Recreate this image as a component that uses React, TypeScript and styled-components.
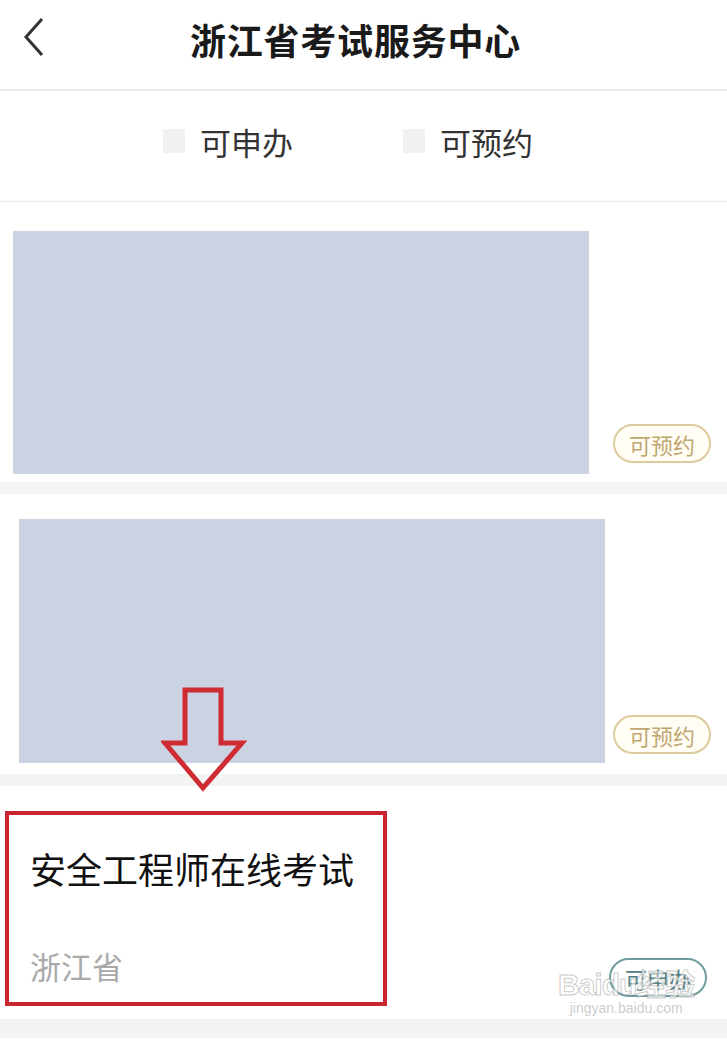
import React from "react";
import styled, { createGlobalStyle } from "styled-components";

const Global = createGlobalStyle`
    html, body {
        margin: 0;
        padding: 0;
        background: #ffffff;
    }
    body {
        font-family: "Noto Sans CJK SC", "Noto Sans", sans-serif;
        color: #222;
    }
`;

const Page = styled.div`
    position: relative;
    width: 727px;
    height: 1039px;
    overflow: hidden;
    background: #fff;
`;

const NavBar = {
    Root: styled.div`
        position: relative;
        height: 89px;
        display: flex;
        align-items: center;
        justify-content: center;
        border-bottom: solid 2px #ececec;
    `,
    Back: styled.svg`
        position: absolute;
        left: 22px;
        top: 16px;
    `,
    Title: styled.h1`
        margin: 0 16px 12px 0;
        font-size: 36px;
        font-weight: 700;
        letter-spacing: 0.8px;
        color: #1a1a1a;
    `
};

const Filter = {
    Root: styled.div`
        height: 111px;
        box-sizing: border-box;
        padding: 0 0 10px 163px;
        display: flex;
        align-items: center;
        gap: 110px;
        border-bottom: solid 1px #ececec;
    `,
    Item: styled.label`
        display: flex;
        align-items: center;
        gap: 15px;
        font-size: 31px;
        color: #333;
    `,
    Box: styled.span`
        display: block;
        width: 22px;
        height: 24px;
        background: #f1f1f1;
        border-radius: 2px;
    `
};

const Band = styled.div<{ $h: number }>`
    height: ${p => p.$h}px;
    background: #f3f3f3;
`;

const Card = {
    Root: styled.div<{ $h: number; $top: number }>`
        height: ${p => p.$h}px;
        box-sizing: border-box;
        padding-top: ${p => p.$top}px;
        display: flex;
        justify-content: space-between;
    `,
    Cover: styled.div<{ $left: number; $w: number; $h: number }>`
        margin-left: ${p => p.$left}px;
        width: ${p => p.$w}px;
        height: ${p => p.$h}px;
        background: #cbd3e2;
    `
};

const Badge = styled.span<{ $tone: "gold" | "teal"; $bottom: number; $right: number }>`
    align-self: flex-end;
    margin: 0 ${p => p.$right}px ${p => p.$bottom}px 0;
    width: 98px;
    height: 39px;
    box-sizing: border-box;
    border-radius: 20px;
    display: flex;
    align-items: center;
    justify-content: center;
    font-size: 22px;
    border: solid 2px ${p => (p.$tone === "gold" ? "#dccb9c" : "#6f9c9e")};
    color: ${p => (p.$tone === "gold" ? "#bfa771" : "#4f7f82")};
    background: ${p => (p.$tone === "gold" ? "#fffdf4" : "#ffffff")};
`;

const Exam = {
    Root: styled.div`
        height: 233px;
        box-sizing: border-box;
        padding: 25px 0 0 5px;
        display: flex;
        justify-content: space-between;
    `,
    Highlight: styled.div`
        width: 382px;
        height: 195px;
        box-sizing: border-box;
        border: solid 4px #c9262f;
        padding: 30px 0 0 21px;
        display: flex;
        flex-direction: column;
    `,
    Name: styled.div`
        font-size: 36px;
        line-height: 46px;
        color: #111;
    `,
    Region: styled.div`
        margin-top: 55px;
        font-size: 31px;
        line-height: 40px;
        color: #a9a9a9;
    `
};

const Arrow = styled.svg`
    position: absolute;
    left: 161px;
    top: 686px;
`;

const Watermark = {
    Root: styled.div`
        position: absolute;
        left: 558px;
        top: 960px;
        display: flex;
        flex-direction: column;
        align-items: center;
        pointer-events: none;
        font-family: "Liberation Sans", "Noto Sans CJK SC", sans-serif;
    `,
    Brand: styled.span`
        font-size: 30px;
        font-weight: 700;
        color: rgba(255, 255, 255, 0.6);
        -webkit-text-stroke: 1px rgba(120, 120, 120, 0.4);
        letter-spacing: -1px;
    `,
    Site: styled.span`
        margin-top: -4px;
        font-size: 14px;
        color: rgba(150, 150, 150, 0.5);
    `
};

const App: React.FC = () => (
    <Page>
        <Global />
        <NavBar.Root>
            <NavBar.Back width="26" height="46" viewBox="0 0 26 46">
                <path d="M20 3 L4 21 L20 39" fill="none" stroke="#333" strokeWidth="3" />
            </NavBar.Back>
            <NavBar.Title>浙江省考试服务中心</NavBar.Title>
        </NavBar.Root>

        <Filter.Root>
            <Filter.Item>
                <Filter.Box />
                可申办
            </Filter.Item>
            <Filter.Item>
                <Filter.Box />
                可预约
            </Filter.Item>
        </Filter.Root>

        <Card.Root $h={280} $top={29}>
            <Card.Cover $left={13} $w={576} $h={243} />
            <Badge $tone="gold" $bottom={19} $right={16}>可预约</Badge>
        </Card.Root>
        <Band $h={12} />

        <Card.Root $h={280} $top={25}>
            <Card.Cover $left={19} $w={586} $h={244} />
            <Badge $tone="gold" $bottom={20} $right={16}>可预约</Badge>
        </Card.Root>
        <Band $h={12} />

        <Exam.Root>
            <Exam.Highlight>
                <Exam.Name>安全工程师在线考试</Exam.Name>
                <Exam.Region>浙江省</Exam.Region>
            </Exam.Highlight>
            <Badge $tone="teal" $bottom={22} $right={20}>可申办</Badge>
        </Exam.Root>
        <Band $h={19} />

        <Arrow width="86" height="108" viewBox="0 0 86 108">
            <path
                d="M24 4 L60 4 L60 57 L81 57 L42 102 L4 57 L24 57 Z"
                fill="none"
                stroke="#cf2b33"
                strokeWidth="5"
                strokeLinejoin="miter"
            />
        </Arrow>

        <Watermark.Root>
            <Watermark.Brand>Baidu经验</Watermark.Brand>
            <Watermark.Site>jingyan.baidu.com</Watermark.Site>
        </Watermark.Root>
    </Page>
);

export default App;
